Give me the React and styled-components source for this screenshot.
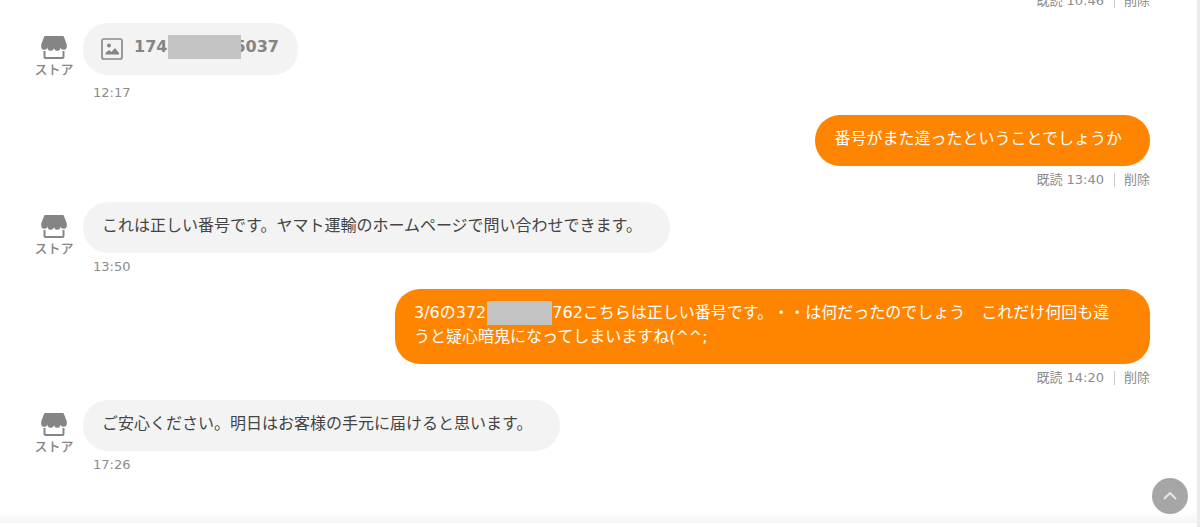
import React from 'react';
import styled, { createGlobalStyle } from 'styled-components';

const GlobalStyle = createGlobalStyle`
  * {
    box-sizing: border-box;
  }

  body {
    margin: 0;
    background: #fff;
    font-family: 'DejaVu Sans', 'Noto Sans CJK JP', sans-serif;
    text-spacing-trim: space-all;
  }
`;

const Page = styled.main`
  display: flex;
  flex-direction: column;
  height: 100vh;
  overflow: hidden;
  border-right: 3px solid #ebebeb;
`;

const Thread = styled.div`
  flex: 1;
  min-height: 0;
  display: flex;
  flex-direction: column;
  justify-content: flex-end;
  gap: 12px;
  padding: 0 47px 48px 34px;
  background: linear-gradient(to top, #f4f4f4, #fff 12px);
`;

const Footer = styled.div`
  flex: none;
  height: 4px;
  background: #fff;
`;

const Message = styled.article`
  flex: none;
  display: flex;
  gap: 9px;
  justify-content: ${({ $mine }) => ($mine ? 'flex-end' : 'flex-start')};
`;

const Sender = styled.div`
  flex: none;
  width: 40px;
  padding-top: 13px;
  display: flex;
  flex-direction: column;
  align-items: center;
  color: #858585;
  font-size: 13px;
  font-weight: 500;
  line-height: 20px;
`;

const Body = styled.div`
  max-width: 755px;
  display: flex;
  flex-direction: column;
  align-items: ${({ $mine }) => ($mine ? 'flex-end' : 'flex-start')};
`;

const Bubble = styled.p`
  margin: 0;
  padding: 12px 28px 15px 19px;
  border-radius: 25px;
  background: ${({ $mine }) => ($mine ? '#ff8500' : '#f3f3f3')};
  color: ${({ $mine }) => ($mine ? '#fff' : '#444')};
  font-size: 16px;
  line-height: 24px;
`;

const Attachment = styled.a`
  display: flex;
  align-items: flex-start;
  gap: 11px;
  margin-bottom: 4px;
  padding: 12px 19px 15px 18px;
  border-radius: 25px;
  background: #f3f3f3;
  color: #858585;
  font-size: 16px;
  font-weight: bold;
  line-height: 24px;
  text-decoration: none;

  svg {
    margin-top: 3px;
  }
`;

const FileName = styled.span`
  display: flex;
`;

const Mask = styled.span`
  display: inline-block;
  position: relative;
  width: ${({ $width }) => $width}px;
  height: 24px;
  margin: ${({ $overlap }) => ($overlap ? '0 -7px 0 1px' : '0 0 0 1px')};
  background: #c3c3c3;
  vertical-align: top;
`;

const Meta = styled.div`
  display: flex;
  align-items: center;
  padding-top: 4px;
  margin-left: ${({ $mine }) => ($mine ? '0' : '10px')};
  color: #8c8c8c;
  font-size: 13px;
  line-height: 20px;
`;

const DeleteButton = styled.button`
  margin: 0 0 0 10px;
  padding: 0 0 0 9px;
  border: 0;
  border-left: 1px solid #ccc;
  background: none;
  color: inherit;
  font: inherit;
  line-height: 14px;
  cursor: pointer;
`;

const TopButton = styled.button`
  position: fixed;
  right: 12px;
  bottom: 13px;
  width: 36px;
  height: 36px;
  display: grid;
  place-items: center;
  padding: 0;
  border: 0;
  border-radius: 50%;
  background: #a6a6a6;
  cursor: pointer;
`;

const StoreIcon = () => (
  <svg width="26" height="24" viewBox="0 0 26 24" aria-hidden="true">
    <path
      fill="#858585"
      d="M4.200 0h17.600q.8 0 1.100.8L25.800 8.500v2a3.200 3.200 0 0 1-6.300.9 3.300 3.300 0 0 1-6.500.8 3.300 3.300 0 0 1-6.500-.8A3.200 3.200 0 0 1 .2 10.500v-2L3.100.8Q3.400 0 4.200 0z"
    />
    <path fill="none" stroke="#858585" strokeWidth="2" d="M3.500 15v6q0 1 1 1h17q1 0 1-1v-6" />
  </svg>
);

const ImageIcon = () => (
  <svg width="22" height="22" viewBox="0 0 22 22" aria-hidden="true">
    <rect x="1" y="1" width="20" height="20" rx="2" fill="none" stroke="#8a8a8a" strokeWidth="1.700" />
    <circle cx="8" cy="7.500" r="2" fill="#858585" />
    <path fill="#858585" d="M4.500 16.500v-1.500l3.500-3 2.500 2 3.500-4 4 5v1.500z" />
  </svg>
);

const Store = () => (
  <Sender>
    <StoreIcon />
    ストア
  </Sender>
);

const ReadMeta = ({ time }) => (
  <Meta $mine>
    既読 {time}
    <DeleteButton type="button">削除</DeleteButton>
  </Meta>
);

const StoreMessage = ({ time, children }) => (
  <Message>
    <Store />
    <Body>
      {children}
      <Meta>{time}</Meta>
    </Body>
  </Message>
);

const MyMessage = ({ time, children }) => (
  <Message $mine>
    <Body $mine>
      {children && <Bubble $mine>{children}</Bubble>}
      <ReadMeta time={time} />
    </Body>
  </Message>
);

const App = () => {
  return (
    <>
      <GlobalStyle />
      <Page>
        <Thread>
          <MyMessage time="10:46" />
          <StoreMessage time="12:17">
            <Attachment href="#image">
              <ImageIcon />
              <FileName>
                174
                <Mask $width={73} $overlap />
                5037
              </FileName>
            </Attachment>
          </StoreMessage>
          <MyMessage time="13:40">番号がまた違ったということでしょうか</MyMessage>
          <StoreMessage time="13:50">
            <Bubble>これは正しい番号です。ヤマト運輸のホームページで問い合わせできます。</Bubble>
          </StoreMessage>
          <MyMessage time="14:20">
            3/6の372
            <Mask $width={65} />
            762こちらは正しい番号です。・・は何だったのでしょう　これだけ何回も違うと疑心暗鬼になってしまいますね(^^;
          </MyMessage>
          <StoreMessage time="17:26">
            <Bubble>ご安心ください。明日はお客様の手元に届けると思います。</Bubble>
          </StoreMessage>
        </Thread>
        <Footer />
      </Page>
      <TopButton type="button" aria-label="ページの先頭へ">
        <svg width="14" height="8" viewBox="0 0 14 8" aria-hidden="true">
          <path fill="none" stroke="#e6e6e6" strokeWidth="2" d="M1 7l6-6 6 6" />
        </svg>
      </TopButton>
    </>
  );
};

export default App;
